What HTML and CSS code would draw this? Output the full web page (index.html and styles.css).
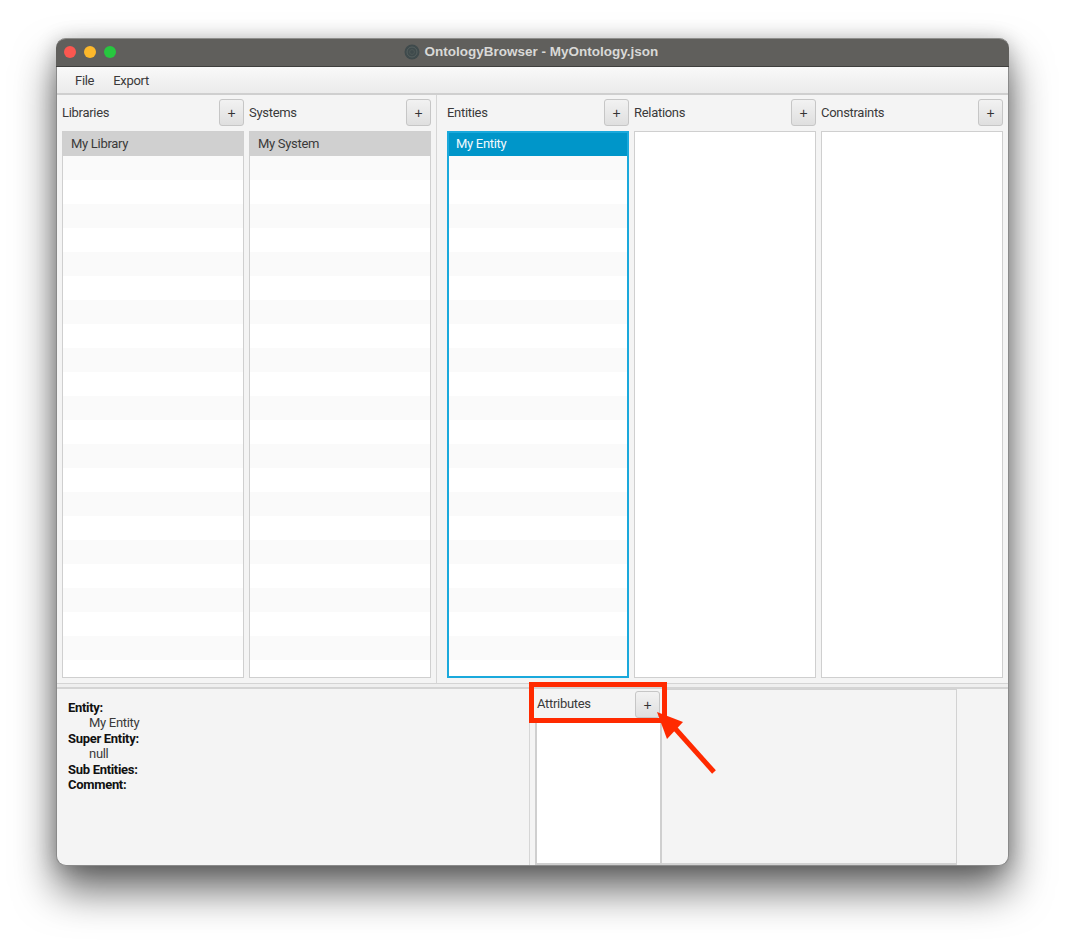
FILE: index.html
```html
<!DOCTYPE html>
<html lang="en">
<head>
  <meta charset="UTF-8" />
  <title>OntologyBrowser - MyOntology.json</title>
  <link rel="stylesheet" href="styles.css">
</head>
<body>
  <div class="window">
    <div class="titlebar">
      <div class="lights">
        <span class="light red"></span>
        <span class="light yellow"></span>
        <span class="light green"></span>
      </div>
      <div class="title">
        <svg class="app-icon" width="16" height="16" viewBox="0 0 16 16">
          <circle cx="8" cy="8" r="7.5" fill="#3f4a4c"/>
          <circle cx="8" cy="8" r="5" fill="none" stroke="#56605f" stroke-width="1"/>
          <circle cx="8" cy="8" r="2.4" fill="none" stroke="#4d5756" stroke-width="1"/>
        </svg>
        <span>OntologyBrowser - MyOntology.json</span>
      </div>
    </div>

    <div class="menubar">
      <span class="menu">File</span>
      <span class="menu">Export</span>
    </div>

    <div class="browser">
      <div class="group group-left">
        <div class="column">
          <div class="col-head"><span>Libraries</span><button class="add">+</button></div>
          <div class="list striped">
            <div class="row sel-grey">My Library</div>
          </div>
        </div>
        <div class="column">
          <div class="col-head"><span>Systems</span><button class="add">+</button></div>
          <div class="list striped">
            <div class="row sel-grey">My System</div>
          </div>
        </div>
      </div>
      <div class="group group-right">
        <div class="column">
          <div class="col-head"><span>Entities</span><button class="add">+</button></div>
          <div class="list striped focused">
            <div class="row sel-blue">My Entity</div>
          </div>
        </div>
        <div class="column">
          <div class="col-head"><span>Relations</span><button class="add">+</button></div>
          <div class="list"></div>
        </div>
        <div class="column">
          <div class="col-head"><span>Constraints</span><button class="add">+</button></div>
          <div class="list"></div>
        </div>
      </div>
    </div>

    <div class="divider"></div>

    <div class="details">
      <div class="info">
        <div class="info-label">Entity:</div>
        <div class="info-value">My Entity</div>
        <div class="info-label">Super Entity:</div>
        <div class="info-value">null</div>
        <div class="info-label">Sub Entities:</div>
        <div class="info-label">Comment:</div>
      </div>
      <div class="attributes">
        <div class="attr-head"><span>Attributes</span><button class="add">+</button></div>
        <div class="attr-list"></div>
      </div>
      <div class="attr-detail"></div>
    </div>

    <!-- annotation on top of the screenshot -->
    <div class="callout"></div>
    <svg class="arrow" width="70" height="72" viewBox="0 0 70 72">
      <polygon points="0,0 26,10 10,27" fill="#ff2a00"/>
      <line x1="15" y1="13" x2="57" y2="60" stroke="#ff2a00" stroke-width="5"/>
    </svg>
  </div>
</body>
</html>
```

FILE: styles.css
```css
* {
  box-sizing: border-box;
}
html, body {
  margin: 0;
  height: 100%;
}
body {
  background: #fff;
  padding: 38px 56px 0;
  font-family: Roboto, "Liberation Sans", sans-serif;
  font-size: 13px;
  letter-spacing: -0.3px;
  color: #3a3a3a;
  overflow: hidden;
}
.window {
  position: relative;
  width: 953px;
  height: 828px;
  display: flex;
  flex-direction: column;
  background: #f4f4f4;
  border: 1px solid #8a8a8a;
  border-top: 0;
  border-radius: 10px;
  box-shadow: 0 24px 42px rgba(0,0,0,0.6), 0 2px 20px rgba(0,0,0,0.22);
}
.titlebar {
  position: relative;
  height: 29px;
  flex: none;
  display: flex;
  align-items: center;
  justify-content: center;
  margin: 0 -1px;
  padding-bottom: 2px;
  background: #605f5c;
  border-top: 1px solid #8e8e8c;
  border-bottom: 1px solid #3f3f3d;
  border-radius: 10px 10px 0 0;
}
.lights {
  position: absolute;
  left: 8px;
  top: 7px;
  display: flex;
  gap: 8px;
}
.light {
  width: 12px;
  height: 12px;
  border-radius: 50%;
}
.red { background: #fb5750; }
.yellow { background: #fdb82b; }
.green { background: #27c73f; }
.title {
  display: flex;
  align-items: center;
  gap: 5px;
  margin-left: -3px;
  color: #d9d9d7;
  font-family: "Liberation Sans", Arial, sans-serif;
  font-weight: bold;
  font-size: 13.5px;
  letter-spacing: 0;
}
.menubar {
  height: 28px;
  flex: none;
  display: flex;
  align-items: center;
  gap: 19px;
  padding-left: 18px;
  padding-top: 1px;
  background: linear-gradient(#f9f9f9, #ebebeb);
  border-bottom: 2px solid #cfcfcf;
}
.browser {
  flex: 1;
  display: flex;
  min-height: 0;
}
.group {
  display: flex;
  gap: 5px;
  padding: 4px 5px 5px;
}
.group-left {
  border-right: 1px solid #d6d6d6;
}
.group-right {
  margin-left: 10px;
  padding-left: 0;
}
.column {
  width: 182px;
  display: flex;
  flex-direction: column;
}
.col-head {
  height: 27px;
  flex: none;
  margin-bottom: 5px;
  display: flex;
  align-items: center;
  justify-content: space-between;
}
.add {
  width: 25px;
  height: 27px;
  padding: 0;
  font: 14px "Liberation Sans", Arial, sans-serif;
  color: #333;
  background: linear-gradient(#f2f2f2, #dfdfdf);
  border: 1px solid #c6c6c6;
  border-radius: 3px;
}
.list {
  flex: 1;
  background: #fff;
  border: 1px solid #cfcfcf;
}
.striped {
  background-image: repeating-linear-gradient(#fff 0 24px, #fafafa 24px 48px);
}
.focused {
  border: 2px solid #1aa9dc;
  background-position: 0 -1px;
}
.row {
  height: 24px;
  line-height: 24px;
  padding-left: 8px;
}
.sel-grey {
  background: #d0d0d0;
}
.sel-blue {
  height: 23px;
  line-height: 22px;
  padding-left: 7px;
  background: #0096c9;
  color: #f2fafd;
}
.divider {
  height: 6px;
  flex: none;
  background: #efefef;
  border-top: 1px solid #d4d4d4;
  border-bottom: 2px solid #d4d4d4;
}
.details {
  flex: none;
  height: 176px;
  display: flex;
}
.info {
  width: 473px;
  padding: 11px 11px;
  border-right: 1px solid #d6d6d6;
  line-height: 15.4px;
}
.info-label {
  font-weight: bold;
  color: #111;
}
.info-value {
  padding-left: 21px;
}
.attributes {
  width: 127px;
  margin-left: 5px;
  display: flex;
  flex-direction: column;
}
.attr-head {
  height: 34px;
  flex: none;
  display: flex;
  align-items: flex-start;
  justify-content: space-between;
  padding: 2px 2px 0 2px;
}
.attr-head span {
  margin-top: 5px;
}
.attr-list {
  flex: 1;
  background: #fff;
  border: 1px solid #cfcfcf;
  border-width: 0 2px 2px;
}
.attr-detail {
  width: 295px;
  border: 1px solid #d2d2d2;
  border-width: 1px 1px 2px 0;
}
.callout {
  position: absolute;
  left: 472px;
  top: 644px;
  width: 138px;
  height: 41px;
  border: 5px solid #ff2a00;
}
.arrow {
  position: absolute;
  left: 600px;
  top: 674px;
}
```
